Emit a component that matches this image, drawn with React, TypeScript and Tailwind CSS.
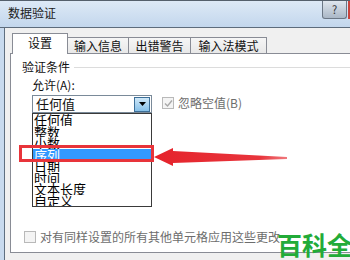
import React from "react";

const FONT = '"Noto Sans CJK SC", "Noto Sans", sans-serif';

const tabs = ["设置", "输入信息", "出错警告", "输入法模式"];
const tabWidths = ["w-[56px]", "w-[61px]", "w-[62px]", "w-[76px]"];

const items = ["任何值", "整数", "小数", "序列", "日期", "时间", "文本长度", "自定义"];

function Checkbox({ checked }: { checked?: boolean }) {
  return (
    <div className="flex h-[12px] w-[12px] shrink-0 items-center justify-center border border-[#b9b9b9] bg-[#f4f4f4]">
      {checked && (
        <svg width="9" height="9" viewBox="0 0 9 9">
          <path d="M1 4.5 L3.5 7 L8 1.5" stroke="#a8a8a8" strokeWidth="1.4" fill="none" />
        </svg>
      )}
    </div>
  );
}

export default function App() {
  return (
    <div
      className="relative h-[260px] w-[350px] overflow-hidden bg-[#f0f0f0] text-[12px] text-[#111]"
      style={{ fontFamily: FONT }}
    >
      {/* title bar */}
      <div className="flex h-[28px] items-start border-b border-[#5d6c7c] border-t border-t-[#55606c] bg-linear-to-b from-[#dde9f6] to-[#c3d7ed]">
        <div className="pl-[8px] pt-[5px] leading-[14px] text-[#1b1b1b]">数据验证</div>
        <div className="ml-auto mr-[1px] flex h-[18px] w-[25px] items-center justify-center rounded-b-[3px] border border-t-0 border-[#6b7785] bg-linear-to-b from-[#dfe6ee] to-[#aab7c6] text-[11px] leading-none text-[#333]">
          ?
        </div>
        <div className="h-[18px] w-[2px] bg-[#c9443c]" />
      </div>

      {/* body */}
      <div className="flex h-[232px]">
        <div className="w-[5px] shrink-0 border-r border-[#5f6f80] bg-[#c8daee]" />
        <div className="flex-1 pt-[5px]">
          {/* tabs */}
          <div className="ml-[7px] flex h-[20px] items-end">
            {tabs.map((t, i) =>
              i === 0 ? (
                <div
                  key={t}
                  className={`relative z-10 -mb-px flex h-[21px] ${tabWidths[i]} items-start justify-center border border-b-0 border-[#898c95] bg-white pt-[2px] leading-[14px]`}
                >
                  {t}
                </div>
              ) : (
                <div
                  key={t}
                  className={`flex h-[16px] ${tabWidths[i]} items-center justify-center border border-b-0 border-l-0 border-[#898c95] bg-linear-to-b from-[#f6f6f6] to-[#e8e8e8] leading-[14px]`}
                >
                  {t}
                </div>
              )
            )}
          </div>

          {/* panel */}
          <div className="ml-[5px] flex h-[200px] w-[360px] flex-col border border-[#898c95] bg-white">
            <div className="flex items-center pl-[11px] pt-[6px] leading-[14px]">
              <span>验证条件</span>
              <div className="ml-[4px] h-px flex-1 bg-[#dcdcdc]" />
            </div>
            <div className="ml-[21px] mt-[4px] leading-[14px]">允许(A):</div>
            <div className="ml-[21px] mt-[3px] flex items-start">
              <div className="relative flex h-[18px] w-[120px] items-center border border-[#7a8a99] bg-white">
                <span className="pl-[3px] text-[13px] leading-[14px]">任何值</span>
                <div className="ml-auto mr-px flex h-[15px] w-[16px] items-center justify-center border border-[#3d6f98] bg-linear-to-b from-[#cfe8f8] to-[#86c0e8]">
                  <svg width="7" height="4" viewBox="0 0 7 4">
                    <path d="M0 0 H7 L3.5 4 Z" fill="#000" />
                  </svg>
                </div>
                {/* open list */}
                <div className="absolute left-[-1px] top-[17px] z-20 w-[120px] border border-[#3a3a3a] bg-white">
                  {items.map((it) => (
                    <div
                      key={it}
                      className={`h-[11.5px] overflow-hidden pl-[1px] text-[13px] leading-[11.5px] ${
                        it === "序列" ? "bg-[#3399ff] text-white" : "text-black"
                      }`}
                    >
                      {it}
                    </div>
                  ))}
                </div>
              </div>
              <div className="ml-[10px] mt-[1px] flex items-center">
                <Checkbox checked />
                <span className="ml-[4px] leading-[14px] text-[#6d6d6d]">忽略空值(B)</span>
              </div>
            </div>
            <div className="mt-auto mb-[8px] ml-[13px] flex items-center">
              <Checkbox />
              <span className="ml-[4px] leading-[14px] text-[#6d6d6d]">对有同样设置的所有其他单元格应用这些更改</span>
            </div>
          </div>
        </div>
      </div>

      {/* annotation: red box */}
      <div className="absolute left-[19px] top-[145px] z-30 h-[17px] w-[135px] border-[3px] border-[#e8343a]" />

      {/* annotation: red arrow */}
      <svg className="absolute left-0 top-0 z-30" width="350" height="260" viewBox="0 0 350 260">
        <defs>
          <linearGradient id="tail" x1="0" x2="1" y1="0" y2="0">
            <stop offset="0" stopColor="#e5232b" />
            <stop offset="0.8" stopColor="#e8353c" />
            <stop offset="1" stopColor="#f07a7e" />
          </linearGradient>
        </defs>
        <polygon
          points="154,157 173,148 173,151 287,157 287,159 173,163 173,166"
          fill="url(#tail)"
        />
      </svg>

      {/* watermark */}
      <div className="absolute left-[277px] top-[229px] z-30 whitespace-nowrap text-[25px] font-bold leading-[30px] text-[#22ab38]">
        百科全
      </div>
    </div>
  );
}
